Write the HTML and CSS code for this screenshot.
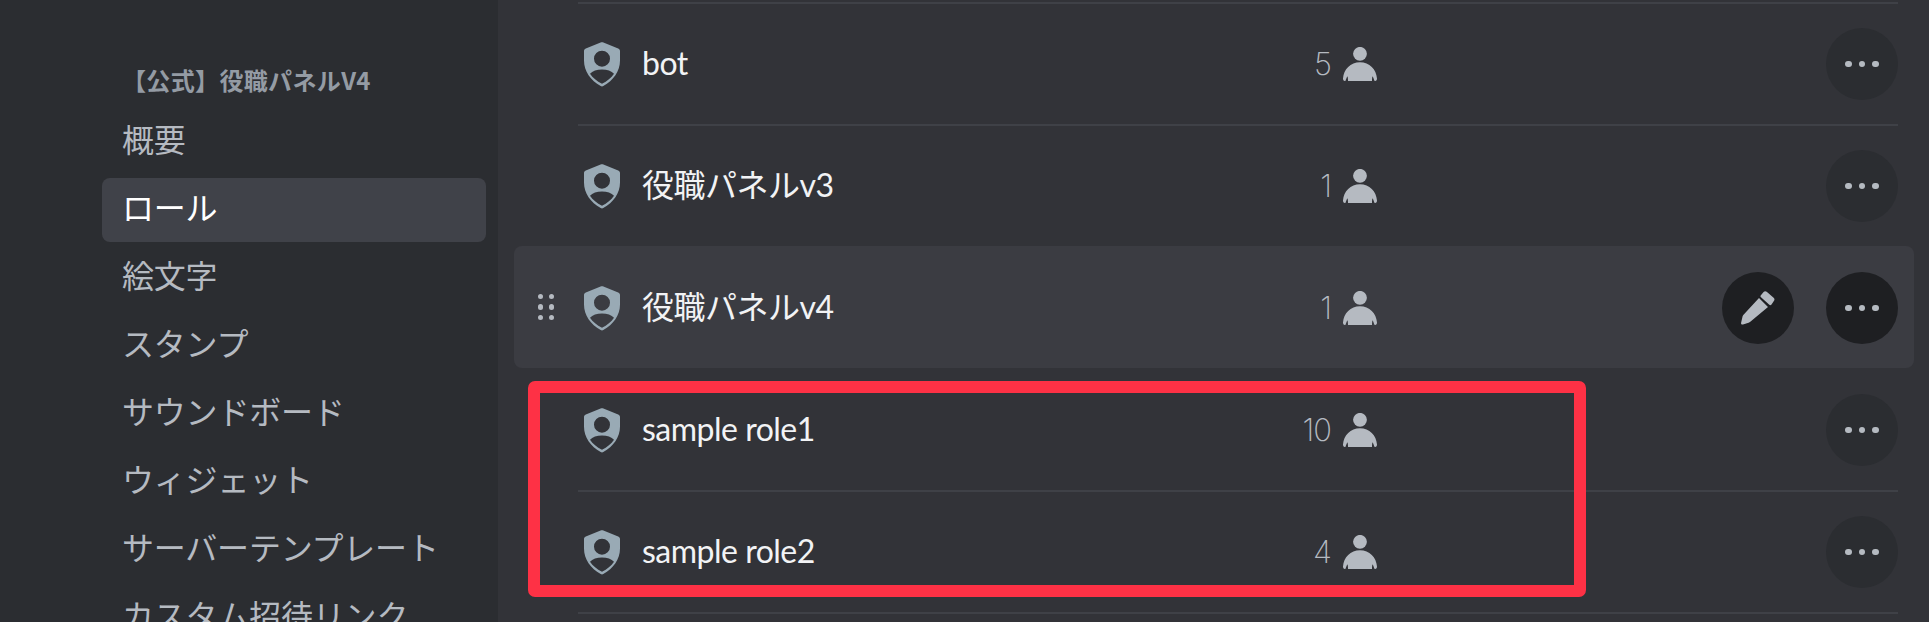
FILE: index.html
```html
<!DOCTYPE html>
<html lang="ja">
<head>
<meta charset="utf-8">
<title>ロール</title>
<link rel="stylesheet" href="styles.css">
</head>
<body>
<svg class="defs" width="0" height="0" aria-hidden="true">
  <symbol id="shield" viewBox="0 0 36 45">
    <path fill-rule="evenodd" d="M16.600.6 1.800 6.500C.7 6.900 0 7.900 0 9v9.500c0 10.800 6.600 19.800 16.700 25.600.8.500 1.800.500 2.600 0C29.400 38.300 36 29.300 36 18.500V9c0-1.100-.7-2.100-1.800-2.500L19.400.6c-.9-.4-1.900-.4-2.800 0ZM18 8.700a8 8 0 1 1 0 16 8 8 0 0 1 0-16ZM6 31.700c2.400-2.700 6.900-4.200 12-4.200s9.600 1.500 12 4.200c-2.800 4-6.800 7.400-12 10-5.200-2.600-9.200-6-12-10Z"/>
  </symbol>
  <symbol id="person" viewBox="0 0 34 34">
    <circle cx="17" cy="6.800" r="6.900"/>
    <path d="M17 15.200c-9.500 0-16.300 7-17 16.300 0 1.400.6 2.500 1.800 2.500h.6c.7-1.700 1.200-3.600 2.100-4.800.5 1.900.5 3.400.5 4.800h24c0-1.400 0-2.900.5-4.800.9 1.200 1.400 3.100 2.100 4.800h.6c1.200 0 1.800-1.100 1.800-2.500-.7-9.300-7.500-16.300-17-16.300Z"/>
  </symbol>
  <symbol id="pencil" viewBox="0 0 34 34">
    <path d="M22.600 1.100a2.200 2.200 0 0 1 3.100-.3l6.900 6a2.200 2.200 0 0 1 .4 2.900l-2.500 3.700a1.500 1.500 0 0 1-2.200.3l-8.300-7.400a1.500 1.500 0 0 1-.1-2.100l2.700-3.100Z"/>
    <path d="M18 7 27 16 9.300 30.800c-.5.400-1 .7-1.700.9L2 33.500C.8 33.900-.2 33 .1 31.800l1.500-6.500c.1-.5.400-1 .7-1.400L18 7Z"/>
  </symbol>
</svg>
<div class="app">
  <aside class="sidebar">
    <h2 class="server">【公式】役職パネルV4</h2>
    <nav class="nav">
      <a class="nav-item">概要</a>
      <a class="nav-item is-selected">ロール</a>
      <a class="nav-item">絵文字</a>
      <a class="nav-item">スタンプ</a>
      <a class="nav-item">サウンドボード</a>
      <a class="nav-item">ウィジェット</a>
      <a class="nav-item">サーバーテンプレート</a>
      <a class="nav-item">カスタム招待リンク</a>
    </nav>
  </aside>
  <main class="main">
    <div class="row">
      <div class="handle"></div>
      <div class="row-body">
        <div class="role"><svg class="shield"><use href="#shield"/></svg><span class="role-name">bot</span></div>
        <div class="count"><span class="count-num">5</span><svg class="person"><use href="#person"/></svg></div>
        <div class="actions"><button class="pill"><span class="dots"><i></i><i></i><i></i></span></button></div>
      </div>
    </div>
    <div class="row">
      <div class="handle"></div>
      <div class="row-body">
        <div class="role"><svg class="shield"><use href="#shield"/></svg><span class="role-name">役職パネルv3</span></div>
        <div class="count"><span class="count-num">1</span><svg class="person"><use href="#person"/></svg></div>
        <div class="actions"><button class="pill"><span class="dots"><i></i><i></i><i></i></span></button></div>
      </div>
    </div>
    <div class="row is-hover">
      <div class="handle"><span class="grip"><i></i><i></i><i></i><i></i><i></i><i></i></span></div>
      <div class="row-body">
        <div class="role"><svg class="shield"><use href="#shield"/></svg><span class="role-name">役職パネルv4</span></div>
        <div class="count"><span class="count-num">1</span><svg class="person"><use href="#person"/></svg></div>
        <div class="actions">
          <button class="pill"><svg class="pencil"><use href="#pencil"/></svg></button>
          <button class="pill"><span class="dots"><i></i><i></i><i></i></span></button>
        </div>
      </div>
    </div>
    <div class="row after-hover">
      <div class="handle"></div>
      <div class="row-body">
        <div class="role"><svg class="shield"><use href="#shield"/></svg><span class="role-name">sample role1</span></div>
        <div class="count"><span class="count-num">10</span><svg class="person"><use href="#person"/></svg></div>
        <div class="actions"><button class="pill"><span class="dots"><i></i><i></i><i></i></span></button></div>
      </div>
    </div>
    <div class="row">
      <div class="handle"></div>
      <div class="row-body">
        <div class="role"><svg class="shield"><use href="#shield"/></svg><span class="role-name">sample role2</span></div>
        <div class="count"><span class="count-num">4</span><svg class="person"><use href="#person"/></svg></div>
        <div class="actions"><button class="pill"><span class="dots"><i></i><i></i><i></i></span></button></div>
      </div>
    </div>
    <div class="row">
      <div class="handle"></div>
      <div class="row-body"></div>
    </div>
    <div class="highlight"></div>
  </main>
</div>
</body>
</html>
```
FILE: styles.css
```css
* { box-sizing: border-box; }
html, body { margin: 0; height: 100%; overflow: hidden; background: #323338; }
body { font-family: "Noto Sans", "Noto Sans CJK JP", sans-serif; }
.defs { position: absolute; }
.app { display: flex; height: 622px; overflow: hidden; }

.sidebar { flex: 0 0 498px; background: #2b2d31; padding: 64px 12px 0 102px; overflow: hidden; }
.server { margin: 0 0 14px; padding-left: 20px; font: 700 24px/32px "Noto Sans CJK JP", sans-serif; letter-spacing: .35px; color: #949ba4; white-space: nowrap; }
.nav { display: flex; flex-direction: column; gap: 4px; }
.nav-item { display: flex; flex: none; align-items: center; height: 64px; padding: 0 20px 8px; border-radius: 8px; font: 400 32px/40px "Noto Sans CJK JP", sans-serif; letter-spacing: -.2px; color: #b5bac1; white-space: nowrap; }
.nav-item.is-selected { background: #404249; color: #fff; }

.main { position: relative; flex: 1; padding: 2px 15px 0 16px; overflow: hidden; }
.row { display: flex; height: 122px; border-radius: 8px; }
.row.is-hover { background: #3b3c42; }
.handle { display: flex; flex: 0 0 64px; align-items: center; justify-content: center; }
.grip { display: grid; grid-template-columns: repeat(2, 5.400px); gap: 5.200px; }
.grip i { width: 5.400px; height: 5.400px; border-radius: 50%; background: #b5bac1; }
.row-body { display: flex; flex: 1; align-items: center; border-top: 2px solid #3f4147; margin-right: 16px; }
.is-hover .row-body, .after-hover .row-body { border-top-color: transparent; }
.role { display: flex; flex: 0 0 640px; align-items: center; gap: 22px; padding-left: 6px; }
.shield { flex: none; width: 36px; height: 45px; fill: #99aab5; }
.role-name { padding-bottom: 2px; font: 400 32px/40px Lato, "Noto Sans CJK JP", sans-serif; letter-spacing: -.5px; color: #f2f3f5; white-space: nowrap; }
.count { display: flex; flex: 0 0 159px; align-items: center; justify-content: flex-end; gap: 12px; }
.count-num { font: 200 31px/40px Inter, sans-serif; letter-spacing: -1px; color: #b5bac1; }
.person { flex: none; width: 34px; height: 34px; fill: #b5bac1; }
.actions { display: flex; gap: 32px; margin-left: auto; }
.pill { display: flex; align-items: center; justify-content: center; width: 72px; height: 72px; padding: 0; border: 0; border-radius: 50%; background: #2b2d31; }
.is-hover .pill { background: #1e1f22; }
.dots { display: flex; gap: 6.500px; }
.dots i { width: 6.800px; height: 6.800px; border-radius: 50%; background: #b5bac1; }
.pencil { width: 34px; height: 34px; fill: #b5bac1; }

.highlight { position: absolute; left: 30px; top: 381px; width: 1058px; height: 216px; border: 12px solid #fe3145; border-radius: 7px; }
```
